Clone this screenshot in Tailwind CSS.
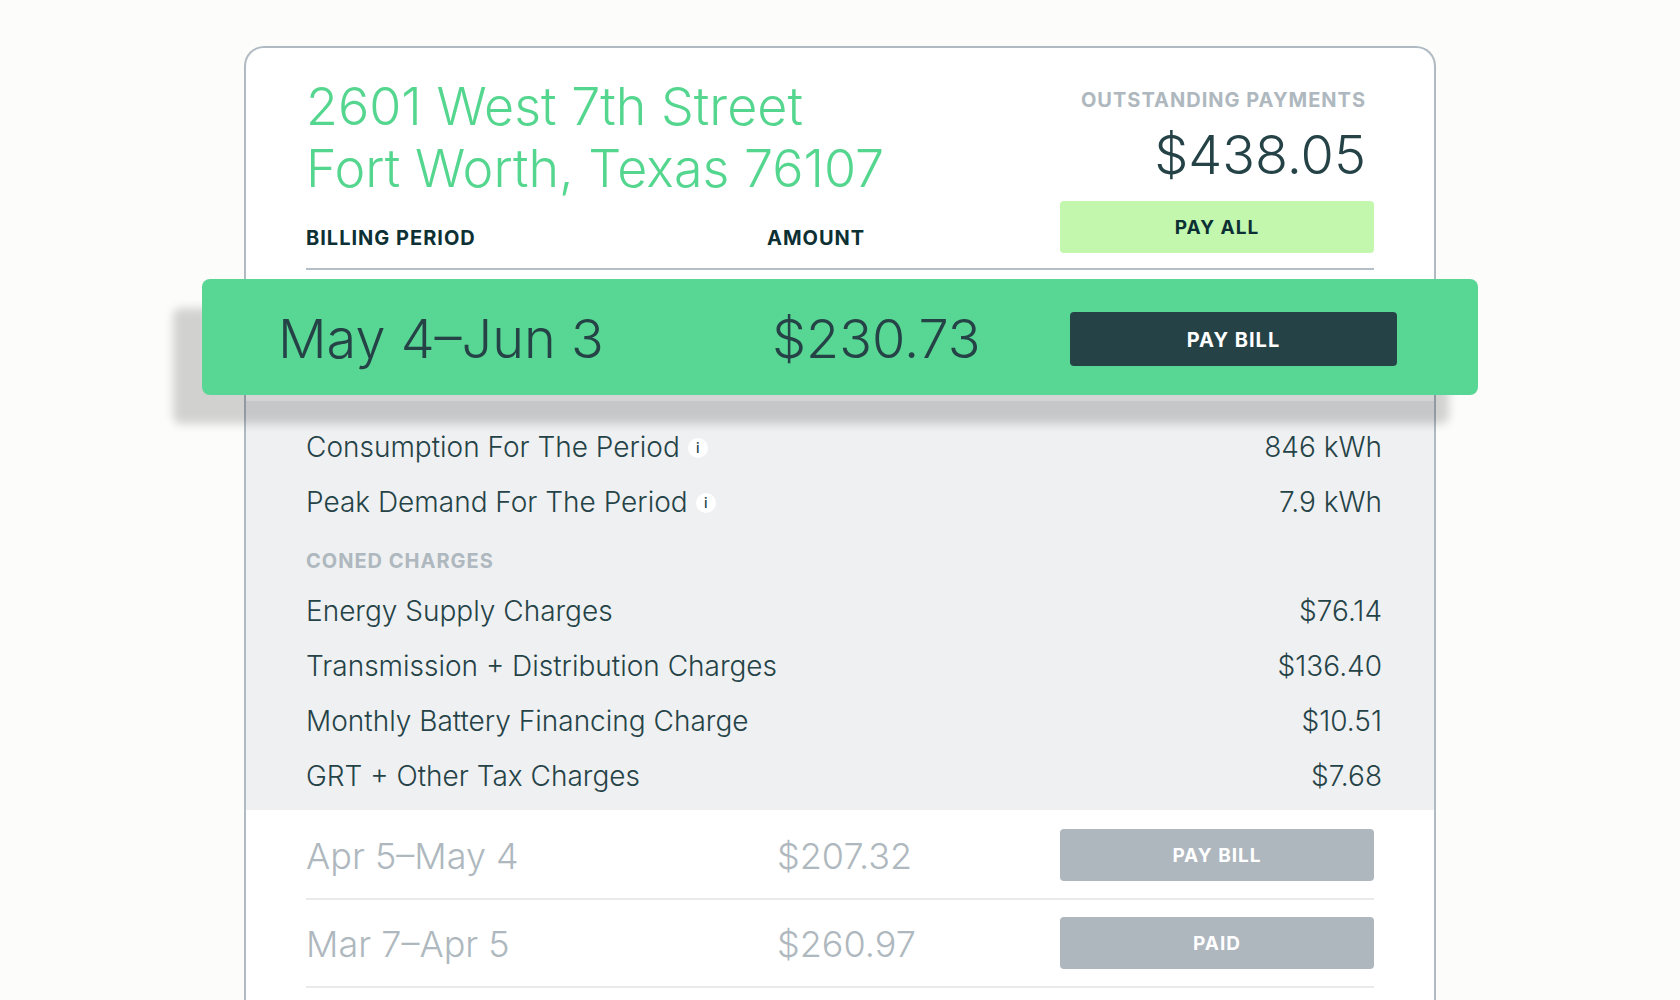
<!DOCTYPE html>
<html lang="en">
<head>
<meta charset="utf-8">
<meta name="viewport" content="width=device-width, initial-scale=1">
<title>Billing</title>
<script src="https://cdn.jsdelivr.net/npm/@tailwindcss/browser@4"></script>
</head>
<body class="bg-[#fcfcfa] font-['Inter',sans-serif] font-light text-[#254347]">
<main class="flex min-h-screen flex-col items-center overflow-hidden px-[60px] pt-[46px]">
  <article class="w-full max-w-[1192px] grow rounded-t-[20px] border-2 border-b-0 border-[#b0bac2] bg-white">
    <header class="mx-[60px] flex justify-between pt-7 pb-px">
      <h1 class="text-[52px] leading-[62px] text-[#54d68f]">2601 West 7th Street<br>Fort Worth, Texas 76107</h1>
      <div class="pt-3 pr-2 text-right">
        <h2 class="text-[20px] leading-6 font-bold tracking-[1px] text-[#aeb8be]">OUTSTANDING PAYMENTS</h2>
        <p class="mt-3 text-[54px] leading-[62px]">$438.05</p>
      </div>
    </header>

    <table class="block">
      <thead class="block">
        <tr class="mx-[60px] grid grid-cols-[1fr_293px_314px] border-b-2 border-[#b6bfc6] pb-[15px] text-left leading-6 tracking-[1px] text-[#0c3033]">
          <th class="pt-[25px] text-[20px] font-bold" scope="col">BILLING PERIOD</th>
          <th class="pt-[25px] text-[20px] font-bold" scope="col">AMOUNT</th>
          <th><button class="h-[52px] w-full rounded-[4px] bg-[#c2f7ad] pt-0.5 text-[19px] font-bold tracking-[1px]">PAY ALL</button></th>
        </tr>
      </thead>
      <tbody class="block">
        <tr class="relative z-10 -mx-[44px] mt-[9px] grid h-[116px] grid-cols-[1fr_298px_327px] items-center rounded-[8px] bg-[#58d693] pt-1 pr-[81px] pl-[76px] text-[54px] leading-[62px] shadow-[-29px_29px_10px_rgba(0,0,0,0.17)]">
          <td>May 4–Jun 3</td>
          <td>$230.73</td>
          <td><button class="block h-[54px] w-full rounded-[4px] bg-[#254347] pt-0.5 text-[20px] leading-6 font-bold tracking-[1px] text-white">PAY BILL</button></td>
        </tr>
        <tr class="mt-1.5 block bg-[#eff0f2]">
          <td class="block pt-[19px] pr-[52px] pb-1.5 pl-[60px]" colspan="3">
            <dl class="text-[28px] leading-[55px]">
              <div class="flex justify-between">
                <dt class="flex items-center gap-2">Consumption For The Period
                  <button class="size-5 rounded-full bg-white text-[14px] leading-5 font-medium" aria-label="About consumption">i</button></dt>
                <dd>846 kWh</dd>
              </div>
              <div class="flex justify-between">
                <dt class="flex items-center gap-2">Peak Demand For The Period
                  <button class="size-5 rounded-full bg-white text-[14px] leading-5 font-medium" aria-label="About peak demand">i</button></dt>
                <dd>7.9 kWh</dd>
              </div>
            </dl>
            <h3 class="pt-[19px] pb-[11px] text-[20px] leading-6 font-bold tracking-[1px] text-[#aeb8be]">CONED CHARGES</h3>
            <dl class="text-[28px] leading-[55px]">
              <div class="flex justify-between"><dt>Energy Supply Charges</dt><dd>$76.14</dd></div>
              <div class="flex justify-between"><dt>Transmission + Distribution Charges</dt><dd>$136.40</dd></div>
              <div class="flex justify-between"><dt>Monthly Battery Financing Charge</dt><dd>$10.51</dd></div>
              <div class="flex justify-between"><dt>GRT + Other Tax Charges</dt><dd>$7.68</dd></div>
            </dl>
          </td>
        </tr>
        <tr class="mx-[60px] grid grid-cols-[1fr_283px_314px] border-b-2 border-[#e8eaeb] pt-[19px] pb-[17px] text-[36px] leading-[54px] text-[#aeb8be]">
          <td class="h-[52px]">Apr 5–May 4</td>
          <td class="h-[52px]">$207.32</td>
          <td><button class="block h-[52px] w-full rounded-[4px] bg-[#aeb6be] pt-0.5 text-[19px] leading-6 font-bold tracking-[1px] text-white">PAY BILL</button></td>
        </tr>
        <tr class="mx-[60px] grid grid-cols-[1fr_283px_314px] border-b-2 border-[#e8eaeb] pt-[17px] pb-[17px] text-[36px] leading-[54px] text-[#aeb8be]">
          <td class="h-[52px]">Mar 7–Apr 5</td>
          <td class="h-[52px]">$260.97</td>
          <td><button class="block h-[52px] w-full rounded-[4px] bg-[#aeb6be] pt-0.5 text-[19px] leading-6 font-bold tracking-[1px] text-white">PAID</button></td>
        </tr>
      </tbody>
    </table>
  </article>
</main>
</body>
</html>
